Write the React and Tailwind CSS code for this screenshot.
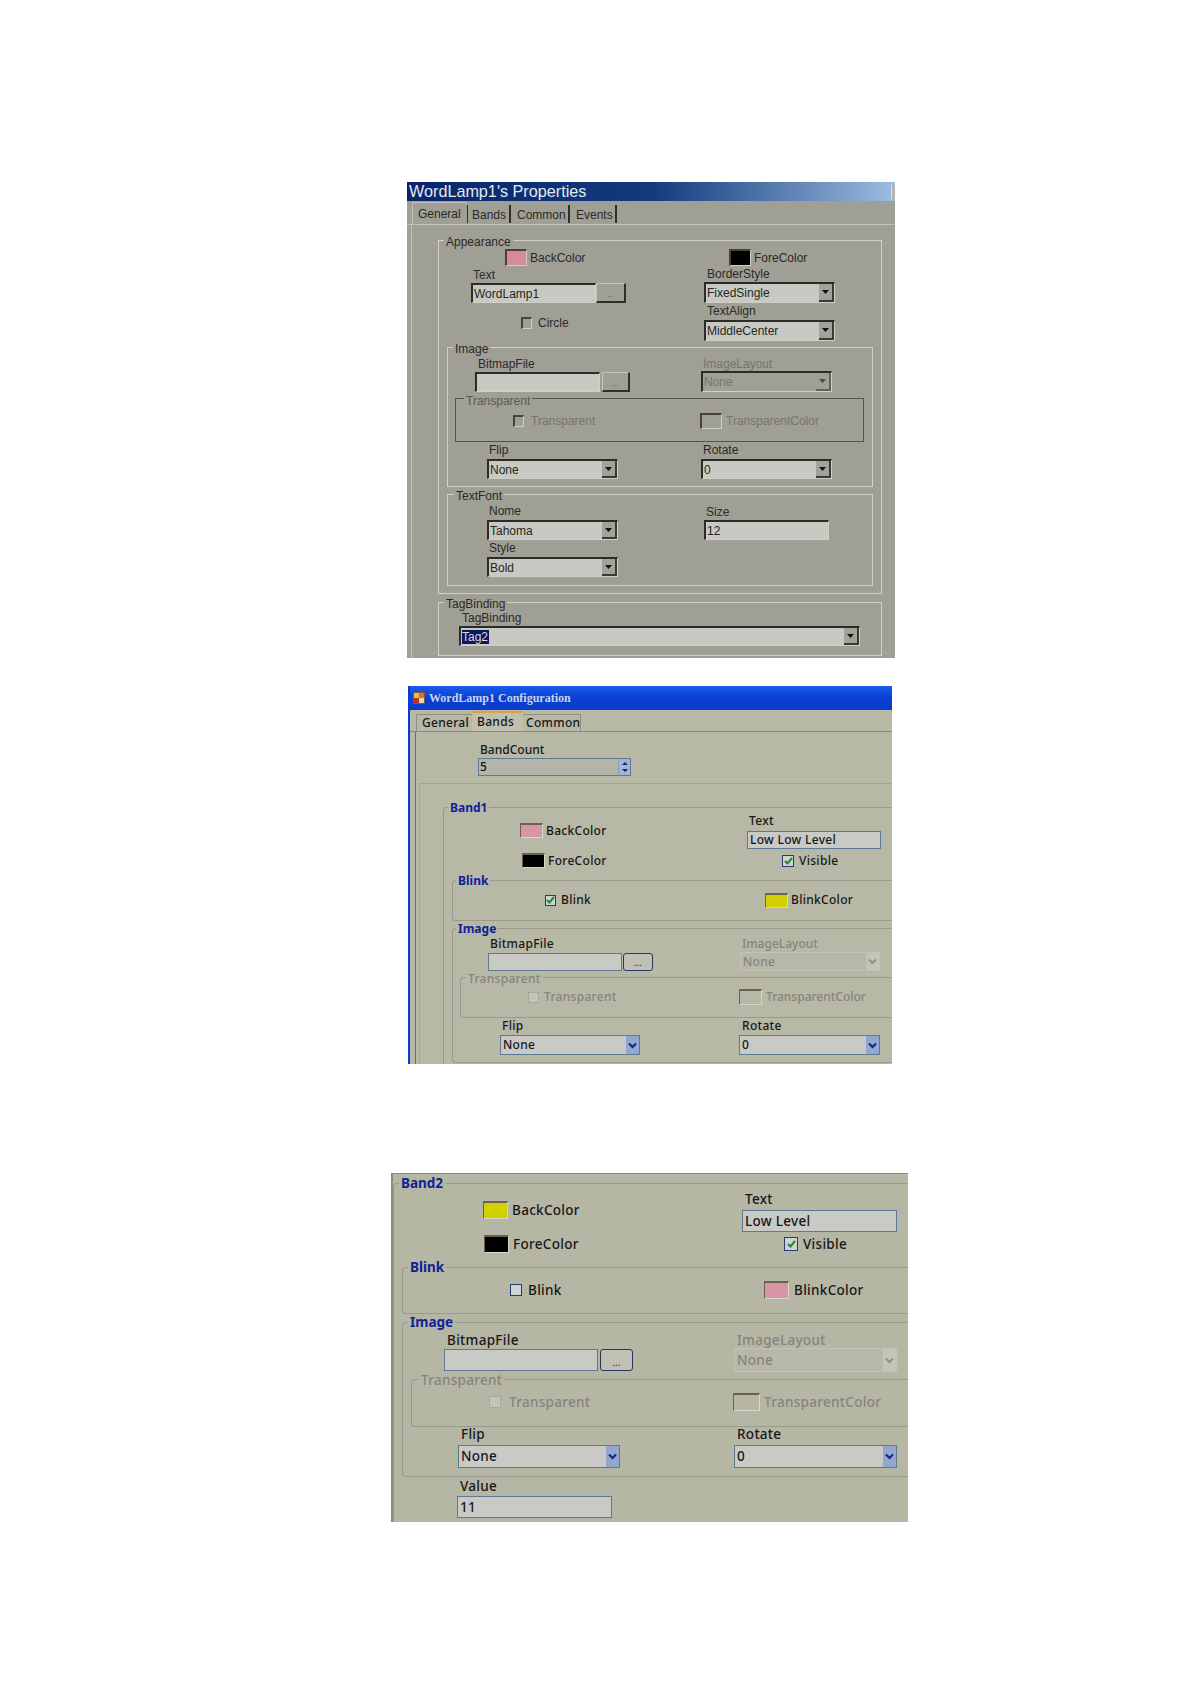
import React from 'react';

// --- classic (grey) dialog parts ---
const DownTriangle = () => (
  <svg width="7" height="4" viewBox="0 0 7 4"><path d="M0 0h7L3.5 4z" fill="#111" /></svg>
);

const Chevron = ({ color = '#14286e' }) => (
  <svg width="9" height="7" viewBox="0 0 9 7" fill="none"><path d="M1 1.5l3.5 3.5L8 1.5" stroke={color} strokeWidth="2" /></svg>
);

const ClassicField = ({ className = '', disabled, children }) => (
  <div className={`flex items-center pl-[1px] border-t-2 border-l-2 border-b border-r border-t-[#2b2b28] border-l-[#2b2b28] border-b-[#d0d0c9] border-r-[#d0d0c9] ${disabled ? 'bg-[#a09f96] text-[#75756c]' : 'bg-[#c9c9c3] text-[#262622]'} ${className}`}>
    {children}
  </div>
);

const ClassicCombo = ({ className = '', disabled, children }) => (
  <ClassicField disabled={disabled} className={`justify-between ${className}`}>
    <span>{children}</span>
    <span className={`flex items-center justify-center w-[15px] h-full bg-[#a3a29a] border-r-2 border-b-2 border-[#3a3a35] ${disabled ? 'opacity-60' : ''}`}>
      <DownTriangle />
    </span>
  </ClassicField>
);

const ClassicButton = ({ className = '' }) => (
  <div className={`flex items-end justify-center pb-[2px] bg-[#a09f96] border-t border-l border-t-[#c4c3bb] border-l-[#c4c3bb] border-b-2 border-r-2 border-[#2f2f2b] text-[8px] leading-[8px] text-[#55554e] ${className}`}>...</div>
);

const Swatch = ({ className = '' }) => (
  <div className={`shrink-0 border-t-2 border-l-2 border-t-[#4a4238] border-l-[#4a4238] border-b border-r border-b-[#cfcfc6] border-r-[#cfcfc6] ${className}`} />
);

const Text = ({ className = '', children }) => (
  <span className={`block h-[14px] leading-[14px] whitespace-nowrap ${className}`}>{children}</span>
);

const ClassicCheck = ({ className = '' }) => (
  <div className={`shrink-0 w-[11px] h-[12px] border-t-2 border-l-2 border-t-[#45453f] border-l-[#45453f] border-b border-r border-b-[#cfcfc6] border-r-[#cfcfc6] ${className}`} />
);

const Group = ({ legend, className = '', legendClass = '', children }) => (
  <div className={`relative border ${className}`}>
    <span className={`absolute h-[14px] leading-[14px] px-[2px] whitespace-nowrap ${legendClass}`}>{legend}</span>
    {children}
  </div>
);

const PropertiesDialog = () => (
  <div className="flex flex-col w-[488px] h-[476px] ml-[407px] mt-[182px] bg-[#a09f96] text-[12px] text-[#2a2a26] overflow-hidden font-['Liberation_Sans',sans-serif]">
    <div className="flex items-center justify-between h-[19px] shrink-0 pl-[2px] bg-linear-to-r from-[#0a246a] via-[#123a7c] to-[#9dbce0] text-[#e4e8f0] text-[16.2px]">
      WordLamp1's Properties
      <div className="w-[4px] h-[14px] bg-[#b5b4ac] border-l border-[#e0e0da]" />
    </div>
    <div className="flex items-end h-[24px] shrink-0 border-b border-[#c4c3bb]">
      <div className="flex items-center h-[22px] ml-[5px] pl-[5px] w-[55px] border-t border-l border-[#c4c3bb] rounded-t-[2px]">General</div>
      <div className="flex items-center h-[18px] w-[44px] pt-[2px] pl-[4px] mb-[1px] border-r-2 border-l border-l-[#2f2f2b] border-r-[#2f2f2b]">Bands</div>
      <div className="flex items-center h-[18px] w-[59px] pt-[2px] pl-[6px] mb-[1px] border-r-2 border-[#2f2f2b]">Common</div>
      <div className="flex items-center h-[18px] w-[47px] pt-[2px] pl-[6px] mb-[1px] border-r-2 border-[#2f2f2b]">Events</div>
    </div>
    <div className="flex-1 ml-[4px] pl-[26px] border-l border-[#c4c3bb]">
      <Group legend="Appearance" className="w-[444px] h-[354px] mt-[15px] border-[#d2d1c9]" legendClass="-top-[6px] left-[5px] bg-[#a09f96]">
        <div className="flex">
          <div className="w-[265px]">
            <div className="flex items-center mt-[8px] ml-[66px] gap-[3px]">
              <Swatch className="w-[22px] h-[17px] bg-[#d48c9c]" />
              <Text>BackColor</Text>
            </div>
            <Text className="mt-[2px] ml-[34px]">Text</Text>
            <div className="flex mt-[1px] ml-[32px]">
              <ClassicField className="w-[125px] h-[20px]">WordLamp1</ClassicField>
              <ClassicButton className="w-[30px] h-[20px]" />
            </div>
            <div className="flex items-center mt-[13px] ml-[82px] gap-[6px]">
              <ClassicCheck />
              <Text>Circle</Text>
            </div>
          </div>
          <div>
            <div className="flex items-center mt-[8px] ml-[25px] gap-[3px]">
              <Swatch className="w-[22px] h-[17px] bg-black" />
              <Text>ForeColor</Text>
            </div>
            <Text className="mt-[1px] ml-[3px]">BorderStyle</Text>
            <ClassicCombo className="w-[131px] h-[21px] mt-[1px]">FixedSingle</ClassicCombo>
            <Text className="mt-[1px] ml-[3px]">TextAlign</Text>
            <ClassicCombo className="w-[131px] h-[21px] mt-[2px]">MiddleCenter</ClassicCombo>
          </div>
        </div>

        <Group legend="Image" className="w-[426px] h-[140px] mt-[6px] ml-[8px] border-[#d2d1c9]" legendClass="-top-[6px] left-[5px] bg-[#a09f96]">
          <div className="flex">
            <div className="w-[253px]">
              <Text className="mt-[9px] ml-[30px]">BitmapFile</Text>
              <div className="flex gap-[2px] mt-[1px] ml-[27px]">
                <ClassicField className="w-[125px] h-[20px]" />
                <ClassicButton className="w-[28px] h-[20px]" />
              </div>
            </div>
            <div>
              <Text className="mt-[9px] ml-[2px] text-[#75756c]">ImageLayout</Text>
              <ClassicCombo disabled className="w-[131px] h-[21px]">None</ClassicCombo>
            </div>
          </div>
          <Group legend="Transparent" className="w-[409px] h-[44px] mt-[6px] ml-[7px] border-[#55554e]" legendClass="-top-[5px] left-[8px] bg-[#a09f96] text-[#5a5a52]">
            <div className="flex items-center h-[17px] mt-[13px] text-[#75756c]">
              <div className="flex items-center gap-[7px] w-[244px] pl-[57px]">
                <ClassicCheck />
                <Text>Transparent</Text>
              </div>
              <div className="flex items-center gap-[4px]">
                <Swatch className="w-[22px] h-[16px]" />
                <Text>TransparentColor</Text>
              </div>
            </div>
          </Group>
          <div className="flex mt-[1px]">
            <div className="w-[253px]">
              <Text className="ml-[41px]">Flip</Text>
              <ClassicCombo className="w-[131px] h-[20px] mt-[2px] ml-[39px]">None</ClassicCombo>
            </div>
            <div>
              <Text className="ml-[2px]">Rotate</Text>
              <ClassicCombo className="w-[131px] h-[20px] mt-[2px]">0</ClassicCombo>
            </div>
          </div>
        </Group>

        <Group legend="TextFont" className="w-[426px] h-[92px] mt-[7px] ml-[8px] border-[#d2d1c9]" legendClass="-top-[6px] left-[6px] bg-[#a09f96]">
          <div className="flex">
            <div className="w-[256px]">
              <Text className="mt-[9px] ml-[41px]">Nome</Text>
              <ClassicCombo className="w-[131px] h-[20px] mt-[2px] ml-[39px]">Tahoma</ClassicCombo>
              <Text className="mt-[1px] ml-[41px]">Style</Text>
              <ClassicCombo className="w-[131px] h-[20px] mt-[2px] ml-[39px]">Bold</ClassicCombo>
            </div>
            <div>
              <Text className="mt-[10px] ml-[2px]">Size</Text>
              <ClassicField className="w-[125px] h-[20px] mt-[1px]">12</ClassicField>
            </div>
          </div>
        </Group>
      </Group>

      <Group legend="TagBinding" className="w-[444px] h-[54px] mt-[8px] border-[#d2d1c9]" legendClass="-top-[6px] left-[5px] bg-[#a09f96]">
        <Text className="mt-[8px] ml-[23px]">TagBinding</Text>
        <ClassicCombo className="w-[401px] h-[20px] mt-[1px] ml-[20px]">
          <span className="bg-[#0a1a5c] text-[#d8d8e0] pr-[1px]">Tag2</span>
        </ClassicCombo>
      </Group>
    </div>
  </div>
);

// --- XP style parts, shared by the two band panels ---
const XpField = ({ className = '', children }) => (
  <div className={`flex items-center pl-[2px] bg-[#c9c9c6] border border-[#5d7a90] text-[#161616] ${className}`}>{children}</div>
);

const XpCombo = ({ className = '', disabled, children }) => (
  <div className={`flex items-center justify-between pl-[2px] border ${disabled ? 'bg-[#b8b8a8] border-[#c4c4b6] text-[#85857a]' : 'bg-[#c9c9c6] border-[#5d7a90] text-[#161616]'} ${className}`}>
    <span>{children}</span>
    <span className={`flex items-center justify-center w-[13px] h-full ${disabled ? 'bg-[#c4c4b8]' : 'bg-[#93a6d2]'}`}>
      <Chevron color={disabled ? '#8f8f84' : '#14286e'} />
    </span>
  </div>
);

const XpButton = ({ className = '' }) => (
  <div className={`flex items-end justify-center pb-[3px] bg-[#c0c0b4] border border-[#243a5c] rounded-[3px] text-[9px] leading-[8px] text-[#222] ${className}`}>...</div>
);

const XpCheck = ({ checked, disabled, className = '' }) => (
  <div className={`flex items-center justify-center shrink-0 border ${disabled ? 'bg-[#c4c4ba] border-[#a8a89c]' : 'bg-[#d0d3d6] border-[#24406a]'} ${className}`}>
    {checked && (
      <svg width="9" height="8" viewBox="0 0 9 8" fill="none"><path d="M1 4l2.5 2.5L8 1" stroke="#1f8a2c" strokeWidth="2" /></svg>
    )}
  </div>
);

const XpSwatch = ({ className = '' }) => (
  <div className={`shrink-0 border-t-2 border-l border-t-[#6a6250] border-l-[#6a6250] border-b border-r border-b-[#d6d6cb] border-r-[#d6d6cb] ${className}`} />
);

const ConfigDialog = () => (
  <div className="flex flex-col w-[484px] h-[378px] ml-[408px] mt-[28px] bg-[#b8b8a6] border-l-2 border-[#0a3ad0] text-[12px] tracking-[0.3px] font-medium text-[#171717] overflow-hidden font-['Noto_Sans',sans-serif]">
    <div className="flex items-center gap-[4px] h-[24px] shrink-0 pl-[3px] bg-linear-to-b from-[#1a5ce8] via-[#0a3fd4] to-[#0a3cc8] text-[#c8d4e8] text-[12px] font-bold tracking-normal font-['Liberation_Serif',serif]">
      <svg width="12" height="12" viewBox="0 0 12 12">
        <rect width="12" height="12" fill="#7a5a30" />
        <rect x="1" y="1" width="5" height="5" fill="#e8c040" />
        <rect x="6" y="1" width="5" height="5" fill="#e07030" />
        <rect x="1" y="6" width="5" height="5" fill="#c03020" />
        <rect x="6" y="6" width="5" height="5" fill="#d8d8c8" />
      </svg>
      WordLamp1 Configuration
    </div>
    <div className="flex items-end h-[22px] shrink-0 pl-[6px] border-b border-[#8a8a7c]">
      <div className="flex items-center w-[56px] h-[17px] pl-[5px] border-t border-l border-[#8f8f82]">General</div>
      <div className="flex items-center w-[51px] h-[20px] pl-[5px] bg-[#c0c0ae] border-t-2 border-[#e0a040] rounded-t-[2px]">Bands</div>
      <div className="flex items-center w-[58px] h-[17px] pl-[3px] border-t border-r border-[#8f8f82]">Common</div>
    </div>
    <div className="flex-1 ml-[5px] border-l border-[#6f6f63] overflow-hidden">
      <Text className="mt-[11px] ml-[64px] tracking-normal">BandCount</Text>
      <div className="flex items-center justify-between w-[153px] h-[18px] mt-[1px] ml-[62px] pl-[1px] bg-[#b4b4aa] border border-[#5d7a90]">
        5
        <span className="flex flex-col items-center justify-center w-[12px] h-full bg-[#a3b4d8] border-l border-[#8a9cc0]">
          <svg width="8" height="12" viewBox="0 0 8 12"><path d="M4 1l3 3H1zM4 11L1 8h6z" fill="#14286e" /></svg>
        </span>
      </div>
      <div className="h-[281px] mt-[7px] ml-[3px] border-t border-l border-[#a4a496]">
        <Group legend="Band1" className="h-[257px] mt-[23px] ml-[23px] border-[#9a9a8c] border-r-0 border-b-0 rounded-tl-[4px]" legendClass="-top-[7px] left-[4px] bg-[#b8b8a6] text-[#0f2296] font-bold tracking-normal">
          <div className="flex">
            <div className="w-[303px]">
              <div className="flex items-center gap-[3px] mt-[15px] ml-[76px]">
                <XpSwatch className="w-[23px] h-[15px] bg-[#d896a4]" />
                <Text>BackColor</Text>
              </div>
              <div className="flex items-center gap-[3px] mt-[15px] ml-[78px]">
                <XpSwatch className="w-[23px] h-[15px] bg-black" />
                <Text>ForeColor</Text>
              </div>
            </div>
            <div>
              <Text className="mt-[6px] ml-[2px]">Text</Text>
              <XpField className="w-[134px] h-[18px] mt-[3px]">Low Low Level</XpField>
              <div className="flex items-center gap-[5px] mt-[5px] ml-[35px]">
                <XpCheck checked className="w-[12px] h-[12px]" />
                <Text>Visible</Text>
              </div>
            </div>
          </div>
          <Group legend="Blink" className="h-[41px] mt-[12px] ml-[8px] border-[#9a9a8c] border-r-0 rounded-l-[4px]" legendClass="-top-[7px] left-[3px] bg-[#b8b8a6] text-[#0f2296] font-bold tracking-normal">
            <div className="flex items-center h-[16px] mt-[11px]">
              <div className="flex items-center gap-[5px] w-[312px] pl-[92px]">
                <XpCheck checked className="w-[11px] h-[11px]" />
                <Text>Blink</Text>
              </div>
              <div className="flex items-center gap-[3px]">
                <XpSwatch className="w-[23px] h-[15px] bg-[#d2d000]" />
                <Text>BlinkColor</Text>
              </div>
            </div>
          </Group>
          <Group legend="Image" className="h-[135px] mt-[7px] ml-[8px] border-[#9a9a8c] border-r-0 rounded-l-[4px]" legendClass="-top-[7px] left-[3px] bg-[#b8b8a6] text-[#0f2296] font-bold tracking-normal">
            <div className="flex">
              <div className="w-[287px]">
                <Text className="mt-[8px] ml-[37px]">BitmapFile</Text>
                <div className="flex gap-[1px] mt-[2px] ml-[35px]">
                  <XpField className="w-[134px] h-[18px]" />
                  <XpButton className="w-[30px] h-[18px]" />
                </div>
              </div>
              <div>
                <Text className="mt-[8px] ml-[2px] tracking-normal text-[#85857a]">ImageLayout</Text>
                <XpCombo disabled className="w-[140px] h-[19px] mt-[1px]">None</XpCombo>
              </div>
            </div>
            <Group legend="Transparent" className="h-[41px] mt-[6px] ml-[7px] border-[#9a9a8c] border-r-0 rounded-l-[4px] text-[#85857a]" legendClass="-top-[6px] left-[5px] bg-[#b8b8a6]">
              <div className="flex items-center h-[16px] mt-[11px]">
                <div className="flex items-center gap-[5px] w-[278px] pl-[67px]">
                  <XpCheck disabled className="w-[11px] h-[11px]" />
                  <Text>Transparent</Text>
                </div>
                <div className="flex items-center gap-[4px]">
                  <XpSwatch className="w-[23px] h-[16px]" />
                  <Text className="tracking-normal">TransparentColor</Text>
                </div>
              </div>
            </Group>
            <div className="flex mt-[1px]">
              <div className="w-[286px]">
                <Text className="ml-[49px]">Flip</Text>
                <XpCombo className="w-[140px] h-[20px] mt-[2px] ml-[47px]">None</XpCombo>
              </div>
              <div>
                <Text className="ml-[3px]">Rotate</Text>
                <XpCombo className="w-[141px] h-[20px] mt-[2px]">0</XpCombo>
              </div>
            </div>
          </Group>
        </Group>
      </div>
    </div>
  </div>
);

const BandPanel = () => (
  <div className="w-[517px] h-[349px] ml-[391px] mt-[109px] bg-[#b6b6a5] border-l-2 border-t border-[#8c8c7e] text-[13.5px] tracking-[0.3px] font-medium text-[#171717] overflow-hidden font-['Noto_Sans',sans-serif]">
    <Group legend="Band2" className="h-[400px] mt-[9px] border-[#9a9a8c] border-r-0 border-b-0 rounded-tl-[4px]" legendClass="-top-[8px] left-[5px] bg-[#b6b6a5] text-[#0f2296] font-bold tracking-normal">
      <div className="flex">
        <div className="w-[348px]">
          <div className="flex items-center gap-[4px] mt-[17px] ml-[89px]">
            <XpSwatch className="w-[25px] h-[18px] bg-[#d2d000]" />
            <Text>BackColor</Text>
          </div>
          <div className="flex items-center gap-[4px] mt-[16px] ml-[90px]">
            <XpSwatch className="w-[25px] h-[18px] bg-black" />
            <Text>ForeColor</Text>
          </div>
        </div>
        <div>
          <Text className="mt-[8px] ml-[3px]">Text</Text>
          <XpField className="w-[155px] h-[22px] mt-[4px]">Low Level</XpField>
          <div className="flex items-center gap-[5px] mt-[5px] ml-[42px]">
            <XpCheck checked className="w-[14px] h-[14px]" />
            <Text>Visible</Text>
          </div>
        </div>
      </div>
      <Group legend="Blink" className="h-[47px] mt-[14px] ml-[8px] border-[#9a9a8c] border-r-0 rounded-l-[4px]" legendClass="-top-[8px] left-[5px] bg-[#b6b6a5] text-[#0f2296] font-bold tracking-normal">
        <div className="flex items-center h-[18px] mt-[13px]">
          <div className="flex items-center gap-[6px] w-[361px] pl-[107px]">
            <XpCheck className="w-[12px] h-[12px]" />
            <Text>Blink</Text>
          </div>
          <div className="flex items-center gap-[5px]">
            <XpSwatch className="w-[25px] h-[18px] bg-[#d896a4]" />
            <Text>BlinkColor</Text>
          </div>
        </div>
      </Group>
      <Group legend="Image" className="h-[155px] mt-[8px] ml-[8px] border-[#9a9a8c] border-r-0 rounded-l-[4px]" legendClass="-top-[8px] left-[5px] bg-[#b6b6a5] text-[#0f2296] font-bold tracking-normal">
        <div className="flex">
          <div className="w-[331px]">
            <Text className="mt-[10px] ml-[44px]">BitmapFile</Text>
            <div className="flex gap-[2px] mt-[2px] ml-[41px]">
              <XpField className="w-[154px] h-[22px]" />
              <XpButton className="w-[33px] h-[22px]" />
            </div>
          </div>
          <div>
            <Text className="mt-[10px] ml-[3px] text-[#85857a]">ImageLayout</Text>
            <XpCombo disabled className="w-[163px] h-[24px] mt-[1px]">None</XpCombo>
          </div>
        </div>
        <Group legend="Transparent" className="h-[48px] mt-[7px] ml-[8px] border-[#9a9a8c] border-r-0 rounded-l-[4px] text-[#85857a]" legendClass="-top-[7px] left-[7px] bg-[#b6b6a5]">
          <div className="flex items-center h-[18px] mt-[13px]">
            <div className="flex items-center gap-[8px] w-[321px] pl-[77px]">
              <XpCheck disabled className="w-[12px] h-[12px]" />
              <Text>Transparent</Text>
            </div>
            <div className="flex items-center gap-[4px]">
              <XpSwatch className="w-[27px] h-[18px]" />
              <Text>TransparentColor</Text>
            </div>
          </div>
        </Group>
        <div className="flex">
          <div className="w-[331px]">
            <Text className="ml-[58px]">Flip</Text>
            <XpCombo className="w-[162px] h-[23px] mt-[4px] ml-[55px]">None</XpCombo>
          </div>
          <div>
            <Text className="ml-[3px]">Rotate</Text>
            <XpCombo className="w-[163px] h-[23px] mt-[4px]">0</XpCombo>
          </div>
        </div>
      </Group>
      <Text className="mt-[2px] ml-[66px]">Value</Text>
      <XpField className="w-[155px] h-[22px] mt-[3px] ml-[63px]">11</XpField>
    </Group>
  </div>
);

export default function App() {
  return (
    <div className="flex flex-col items-start min-h-[1684px] bg-white">
      <PropertiesDialog />
      <ConfigDialog />
      <BandPanel />
    </div>
  );
}
